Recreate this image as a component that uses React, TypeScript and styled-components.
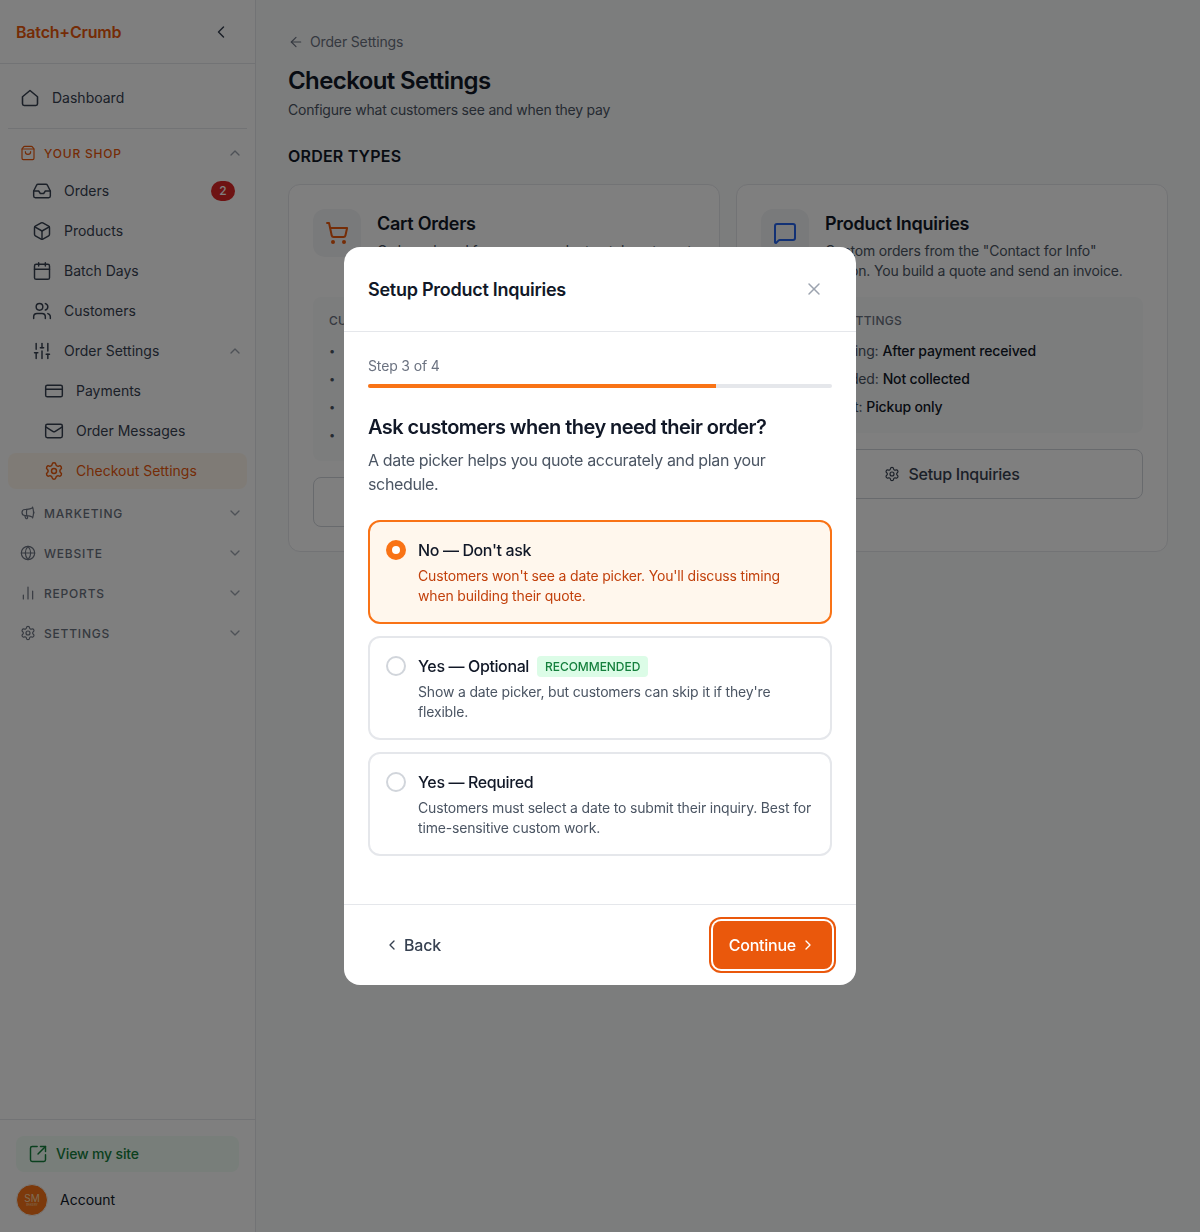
import React from "react";
import styled, { createGlobalStyle } from "styled-components";
import {
  ArrowLeft,
  Box,
  Calendar,
  ChartNoAxesColumn,
  ChevronDown,
  ChevronLeft,
  ChevronRight,
  ChevronUp,
  CreditCard,
  Globe,
  Inbox,
  Mail,
  MessageSquare,
  Settings,
  ShoppingBag,
  ShoppingCart,
  SlidersVertical,
  SquareArrowOutUpRight,
  Users,
  X
} from "lucide-react";
import { HiOutlineMegaphone } from "react-icons/hi2";

const GlobalStyle = createGlobalStyle`
  * { box-sizing: border-box; }
  body {
    margin: 0;
    font-family: Inter, "Liberation Sans", sans-serif;
    background: #f9fafb;
    color: #111827;
  }
`;

const Page = styled.div`
  display: flex;
  height: 1232px;
  overflow: hidden;
`;

const Sidebar = styled.aside`
  width: 256px;
  flex: none;
  display: flex;
  flex-direction: column;
  background: #fff;
  border-right: 1px solid #e5e7eb;
`;

const Brand = styled.div`
  height: 64px;
  flex: none;
  display: flex;
  align-items: center;
  justify-content: space-between;
  padding: 0 24px 0 16px;
  border-bottom: 1px solid #e5e7eb;
  font-size: 16px;
  font-weight: 600;
  letter-spacing: -0.2px;
  color: #ea580c;
  svg {
    color: #374151;
  }
`;

const Nav = styled.nav`
  flex: 1;
  padding: 16px 8px 0;
`;

const NavRow = styled.div<{ $indent?: number; $active?: boolean }>`
  height: 36px;
  margin-bottom: 4px;
  display: flex;
  align-items: center;
  gap: 12px;
  padding-left: ${p => p.$indent ?? 24}px;
  padding-right: 12px;
  border-radius: 8px;
  font-size: 14px;
  line-height: 16px;
  font-weight: 400;
  color: ${p => (p.$active ? "#ea580c" : "#374151")};
  background: ${p => (p.$active ? "#fff7ed" : "transparent")};
  svg:first-child {
    flex: none;
  }
`;

const TopRow = styled(NavRow)`
  padding-left: 12px;
`;

const NavLabel = styled.span`
  flex: 1;
`;

const Caret = styled(ChevronUp)`
  color: #9ca3af;
  margin-right: -8px;
`;

const Divider = styled.div`
  height: 1px;
  background: #e5e7eb;
  margin: 12px 0 4px;
`;

const GroupRow = styled.div<{ $open?: boolean }>`
  height: 40px;
  display: flex;
  align-items: center;
  gap: 8px;
  padding: 0 4px 0 12px;
  font-size: 12px;
  font-weight: 500;
  letter-spacing: 0.8px;
  color: ${p => (p.$open ? "#ea580c" : "#6b7280")};
  svg:last-child {
    color: #9ca3af;
  }
`;

const Badge = styled.span`
  min-width: 24px;
  height: 20px;
  border-radius: 10px;
  background: #dc2626;
  color: #fff;
  font-size: 12px;
  font-weight: 500;
  display: flex;
  align-items: center;
  justify-content: center;
`;

const SideFooter = styled.div`
  flex: none;
  height: 113px;
  border-top: 1px solid #e5e7eb;
  padding: 16px 16px 0;
`;

const SiteLink = styled.div`
  height: 36px;
  display: flex;
  align-items: center;
  gap: 8px;
  padding: 0 12px;
  border-radius: 8px;
  background: #f0fdf4;
  color: #15803d;
  font-size: 14px;
  line-height: 16px;
  font-weight: 500;
  letter-spacing: -0.15px;
`;

const AccountRow = styled.div`
  display: flex;
  align-items: center;
  gap: 12px;
  margin-top: 12px;
  font-size: 14px;
  line-height: 16px;
  color: #111827;
`;

const Avatar = styled.div`
  width: 32px;
  height: 32px;
  border-radius: 50%;
  background: #f97316;
  border: 1px solid #f3f4f6;
  color: #fed7aa;
  font-size: 10px;
  line-height: 10px;
  display: flex;
  flex-direction: column;
  align-items: center;
  justify-content: center;
`;

const AvatarSmall = styled.span`
  font-size: 3px;
  line-height: 4px;
`;

const Main = styled.main`
  flex: 1;
  padding: 32px;
`;

const Crumb = styled.div`
  display: flex;
  align-items: center;
  gap: 6px;
  height: 20px;
  font-size: 14px;
  line-height: 16px;
  letter-spacing: -0.15px;
  color: #6b7280;
`;

const Title = styled.h1`
  margin: 13px 0 0;
  font-size: 24px;
  line-height: 32px;
  font-weight: 600;
  letter-spacing: -0.6px;
  color: #111827;
`;

const Subtitle = styled.p`
  margin: 3px 0 0;
  font-size: 14px;
  line-height: 20px;
  letter-spacing: -0.22px;
  color: #4b5563;
`;

const SectionTitle = styled.h2`
  margin: 24px 0 16px;
  font-size: 16px;
  line-height: 24px;
  font-weight: 600;
  letter-spacing: 0.2px;
  color: #111827;
`;

const CardGrid = styled.div`
  display: grid;
  grid-template-columns: 1fr 1fr;
  gap: 16px;
`;

const Card = styled.section`
  background: #fff;
  border: 1px solid #e5e7eb;
  border-radius: 12px;
  padding: 24px;
`;

const CardHead = styled.div`
  display: flex;
  gap: 16px;
  margin-bottom: 16px;
`;

const IconTile = styled.div<{ $color: string }>`
  width: 48px;
  height: 48px;
  flex: none;
  border-radius: 12px;
  background: #f3f4f6;
  color: ${p => p.$color};
  display: flex;
  align-items: center;
  justify-content: center;
`;

const CardTitle = styled.h3`
  margin: 0 0 3px;
  padding-top: 1px;
  font-size: 18px;
  line-height: 28px;
  font-weight: 600;
  letter-spacing: -0.25px;
  color: #111827;
`;

const CardText = styled.p`
  margin: 0;
  font-size: 14px;
  line-height: 20px;
  letter-spacing: -0.16px;
  color: #4b5563;
`;

const SettingsBox = styled.div`
  background: #f9fafb;
  border-radius: 8px;
  padding: 16px;
`;

const SettingsLabel = styled.div`
  font-size: 12px;
  line-height: 16px;
  font-weight: 500;
  letter-spacing: 0.3px;
  color: #6b7280;
  margin-bottom: 12px;
`;

const SettingsList = styled.ul`
  list-style: none;
  margin: 0;
  padding: 0;
  display: flex;
  flex-direction: column;
  gap: 8px;
`;

const SettingsItem = styled.li`
  display: flex;
  font-size: 14px;
  line-height: 20px;
  letter-spacing: -0.15px;
  color: #4b5563;
  white-space: nowrap;
  &::before {
    content: "•";
    width: 15px;
    flex: none;
    font-size: 11px;
  }
  b {
    font-weight: 500;
    color: #111827;
    margin-left: 4px;
  }
`;

const OutlineButton = styled.button`
  width: 100%;
  height: 50px;
  margin-top: 16px;
  display: flex;
  align-items: center;
  justify-content: center;
  gap: 8px;
  background: #fff;
  border: 1px solid #d1d5db;
  border-radius: 8px;
  font: 500 16px/24px Inter, sans-serif;
  letter-spacing: -0.25px;
  color: #374151;
`;

const Backdrop = styled.div`
  position: fixed;
  inset: 0;
  background: rgba(0, 0, 0, 0.5);
  display: flex;
  justify-content: center;
  padding-top: 247px;
`;

const Modal = styled.div`
  width: 512px;
  height: 738px;
  display: flex;
  flex-direction: column;
  background: #fff;
  border-radius: 16px;
`;

const ModalHead = styled.div`
  height: 85px;
  flex: none;
  display: flex;
  align-items: center;
  justify-content: space-between;
  padding: 0 32px 0 24px;
  border-bottom: 1px solid #e5e7eb;
  font-size: 18px;
  font-weight: 600;
  letter-spacing: -0.26px;
  color: #111827;
  svg {
    color: #9ca3af;
  }
`;

const ModalBody = styled.div`
  flex: 1;
  padding: 24px;
`;

const StepText = styled.div`
  font-size: 14px;
  line-height: 20px;
  letter-spacing: -0.15px;
  color: #6b7280;
`;

const Track = styled.div`
  height: 4px;
  margin-top: 8px;
  background: #e5e7eb;
  border-radius: 2px;
  overflow: hidden;
`;

const Fill = styled.div`
  height: 100%;
  background: #f97316;
`;

const Question = styled.h2`
  margin: 25px 0 7px;
  font-size: 20px;
  line-height: 28px;
  font-weight: 600;
  letter-spacing: -0.55px;
  color: #111827;
`;

const QuestionHelp = styled.p`
  margin: 0 0 24px;
  font-size: 16px;
  line-height: 24px;
  letter-spacing: -0.35px;
  color: #4b5563;
`;

const Options = styled.div`
  display: flex;
  flex-direction: column;
  gap: 12px;
`;

const Option = styled.div<{ $selected?: boolean }>`
  display: flex;
  gap: 12px;
  padding: 16px;
  border: 2px solid ${p => (p.$selected ? "#f97316" : "#e5e7eb")};
  border-radius: 12px;
  background: ${p => (p.$selected ? "#fff7ed" : "#fff")};
`;

const Radio = styled.span<{ $selected?: boolean }>`
  width: 20px;
  height: 20px;
  flex: none;
  margin-top: 2px;
  border-radius: 50%;
  border: ${p => (p.$selected ? "6px solid #f97316" : "2px solid #d1d5db")};
  background: #fff;
`;

const OptionHead = styled.div`
  display: flex;
  align-items: center;
  gap: 8px;
  font-size: 16px;
  line-height: 24px;
  font-weight: 500;
  letter-spacing: -0.38px;
  color: #111827;
`;

const Tag = styled.span`
  padding: 0 8px;
  border-radius: 4px;
  background: #dcfce7;
  color: #15803d;
  font-size: 12px;
  line-height: 21px;
  font-weight: 500;
  letter-spacing: -0.05px;
`;

const OptionText = styled.p<{ $selected?: boolean }>`
  margin: 4px 0 0;
  font-size: 14px;
  line-height: 20px;
  letter-spacing: -0.17px;
  color: ${p => (p.$selected ? "#c2410c" : "#4b5563")};
`;

const ModalFoot = styled.div`
  height: 81px;
  flex: none;
  display: flex;
  align-items: center;
  justify-content: space-between;
  padding: 0 24px;
  border-top: 1px solid #e5e7eb;
`;

const BackButton = styled.button`
  height: 48px;
  display: flex;
  align-items: center;
  gap: 4px;
  padding: 0 16px;
  background: none;
  border: 0;
  font: 500 16px/24px Inter, sans-serif;
  letter-spacing: -0.2px;
  color: #374151;
`;

const ContinueButton = styled.button`
  height: 48px;
  display: flex;
  align-items: center;
  gap: 4px;
  padding: 0 16px;
  background: #ea580c;
  border: 0;
  border-radius: 8px;
  box-shadow: 0 0 0 2px #fff, 0 0 0 4px #ea580c;
  font: 500 16px/24px Inter, sans-serif;
  letter-spacing: -0.25px;
  color: #fff;
`;

const HomeIcon = () => (
  <svg
    width="20"
    height="20"
    viewBox="0 0 24 24"
    fill="none"
    stroke="currentColor"
    strokeWidth="1.9"
    strokeLinejoin="round"
  >
    <path d="M3 10.5 12 3l9 7.5V19a2 2 0 0 1-2 2H5a2 2 0 0 1-2-2z" />
  </svg>
);

const cartRows = [
  ["Payment:", "At checkout"],
  ["Date needed:", "Batch days"],
  ["Delivery:", "Pickup only"],
  ["Tipping:", "Off"]
];

const inquiryRows = [
  ["Quote timing:", "After payment received"],
  ["Date needed:", "Not collected"],
  ["Fulfillment:", "Pickup only"]
];

const options = [
  {
    title: "No — Don't ask",
    text: "Customers won't see a date picker. You'll discuss timing when building their quote.",
    selected: true
  },
  {
    title: "Yes — Optional",
    text: "Show a date picker, but customers can skip it if they're flexible.",
    recommended: true
  },
  {
    title: "Yes — Required",
    text: "Customers must select a date to submit their inquiry. Best for time-sensitive custom work."
  }
];

const groups = [
  { label: "MARKETING", icon: HiOutlineMegaphone },
  { label: "WEBSITE", icon: Globe },
  { label: "REPORTS", icon: ChartNoAxesColumn },
  { label: "SETTINGS", icon: Settings }
];

export default function App() {
  return (
    <>
      <GlobalStyle />
      <Page>
        <Sidebar>
          <Brand>
            Batch+Crumb
            <ChevronLeft size={20} strokeWidth={1.75} />
          </Brand>
          <Nav>
            <TopRow>
              <HomeIcon />
              <NavLabel>Dashboard</NavLabel>
            </TopRow>
            <Divider />
            <GroupRow $open>
              <ShoppingBag size={16} strokeWidth={1.75} />
              <NavLabel>YOUR SHOP</NavLabel>
              <ChevronUp size={16} />
            </GroupRow>
            <NavRow>
              <Inbox size={20} strokeWidth={1.75} />
              <NavLabel>Orders</NavLabel>
              <Badge>2</Badge>
            </NavRow>
            <NavRow>
              <Box size={20} strokeWidth={1.75} />
              <NavLabel>Products</NavLabel>
            </NavRow>
            <NavRow>
              <Calendar size={20} strokeWidth={1.75} />
              <NavLabel>Batch Days</NavLabel>
            </NavRow>
            <NavRow>
              <Users size={20} strokeWidth={1.75} />
              <NavLabel>Customers</NavLabel>
            </NavRow>
            <NavRow>
              <SlidersVertical size={20} strokeWidth={1.75} />
              <NavLabel>Order Settings</NavLabel>
              <Caret size={16} />
            </NavRow>
            <NavRow $indent={36}>
              <CreditCard size={20} strokeWidth={1.75} />
              <NavLabel>Payments</NavLabel>
            </NavRow>
            <NavRow $indent={36}>
              <Mail size={20} strokeWidth={1.75} />
              <NavLabel>Order Messages</NavLabel>
            </NavRow>
            <NavRow $indent={36} $active>
              <Settings size={20} strokeWidth={1.75} />
              <NavLabel>Checkout Settings</NavLabel>
            </NavRow>
            {groups.map(g => (
              <GroupRow key={g.label}>
                <g.icon size={16} strokeWidth={1.75} />
                <NavLabel>{g.label}</NavLabel>
                <ChevronDown size={16} />
              </GroupRow>
            ))}
          </Nav>
          <SideFooter>
            <SiteLink>
              <SquareArrowOutUpRight size={20} strokeWidth={1.75} />
              View my site
            </SiteLink>
            <AccountRow>
              <Avatar>
                SM
                <AvatarSmall>BAKERY</AvatarSmall>
              </Avatar>
              Account
            </AccountRow>
          </SideFooter>
        </Sidebar>
        <Main>
          <Crumb>
            <ArrowLeft size={16} strokeWidth={1.75} />
            Order Settings
          </Crumb>
          <Title>Checkout Settings</Title>
          <Subtitle>Configure what customers see and when they pay</Subtitle>
          <SectionTitle>ORDER TYPES</SectionTitle>
          <CardGrid>
            <Card>
              <CardHead>
                <IconTile $color="#ea580c">
                  <ShoppingCart size={24} strokeWidth={2} />
                </IconTile>
                <div>
                  <CardTitle>Cart Orders</CardTitle>
                  <CardText>
                    Orders placed from your product catalog at a set price.
                  </CardText>
                </div>
              </CardHead>
              <SettingsBox>
                <SettingsLabel>CURRENT SETTINGS</SettingsLabel>
                <SettingsList>
                  {cartRows.map(r => (
                    <SettingsItem key={r[0]}>
                      {r[0]}
                      <b>{r[1]}</b>
                    </SettingsItem>
                  ))}
                </SettingsList>
              </SettingsBox>
              <OutlineButton>
                <Settings size={16} strokeWidth={1.75} />
                Edit Cart Orders
              </OutlineButton>
            </Card>
            <Card>
              <CardHead>
                <IconTile $color="#2563eb">
                  <MessageSquare size={24} strokeWidth={2} />
                </IconTile>
                <div>
                  <CardTitle>Product Inquiries</CardTitle>
                  <CardText>
                    Custom orders from the "Contact for Info" button. You build
                    a quote and send an invoice.
                  </CardText>
                </div>
              </CardHead>
              <SettingsBox>
                <SettingsLabel>CURRENT SETTINGS</SettingsLabel>
                <SettingsList>
                  {inquiryRows.map(r => (
                    <SettingsItem key={r[0]}>
                      {r[0]}
                      <b>{r[1]}</b>
                    </SettingsItem>
                  ))}
                </SettingsList>
              </SettingsBox>
              <OutlineButton>
                <Settings size={16} strokeWidth={1.75} />
                Setup Inquiries
              </OutlineButton>
            </Card>
          </CardGrid>
        </Main>
      </Page>
      <Backdrop>
        <Modal>
          <ModalHead>
            Setup Product Inquiries
            <X size={20} strokeWidth={1.75} />
          </ModalHead>
          <ModalBody>
            <StepText>Step 3 of 4</StepText>
            <Track>
              <Fill style={{ width: `${(3 / 4) * 100}%` }} />
            </Track>
            <Question>Ask customers when they need their order?</Question>
            <QuestionHelp>
              A date picker helps you quote accurately and plan your schedule.
            </QuestionHelp>
            <Options>
              {options.map(o => (
                <Option key={o.title} $selected={o.selected}>
                  <Radio $selected={o.selected} />
                  <div>
                    <OptionHead>
                      {o.title}
                      {o.recommended && <Tag>RECOMMENDED</Tag>}
                    </OptionHead>
                    <OptionText $selected={o.selected}>{o.text}</OptionText>
                  </div>
                </Option>
              ))}
            </Options>
          </ModalBody>
          <ModalFoot>
            <BackButton>
              <ChevronLeft size={16} />
              Back
            </BackButton>
            <ContinueButton>
              Continue
              <ChevronRight size={16} />
            </ContinueButton>
          </ModalFoot>
        </Modal>
      </Backdrop>
    </>
  );
}
